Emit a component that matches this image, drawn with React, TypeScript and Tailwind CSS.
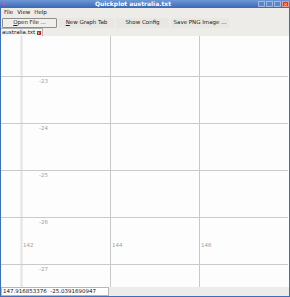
import React from 'react';

const font = { fontFamily: '"DejaVu Sans", "Liberation Sans", sans-serif' };

const hLines = [76, 123, 170, 217, 264];
const vLines = [110, 199];
const yLabels = ['-23', '-24', '-25', '-26', '-27'];

const Plot = () => (
  <svg width="287" height="251" className="block">
    <rect width="287" height="251" fill="#fdfdfd" />
    <line x1="20.5" y1="0" x2="20.5" y2="251" stroke="#e2e2e2" strokeWidth="2" />
    {vLines.map((x) => (
      <line key={x} x1={x - 0.5} y1="0" x2={x - 0.5} y2="251" stroke="#c9c9c9" strokeWidth="1" />
    ))}
    {hLines.map((y, i) => (
      <g key={y}>
        <line x1="0" y1={y - 36 + 0.5} x2="287" y2={y - 36 + 0.5} stroke="#cacaca" strokeWidth="1" />
        <text x="38" y={y - 36 + 7} fontSize="5.5" fill="#a0a0a0" style={font}>
          {yLabels[i]}
        </text>
      </g>
    ))}
    <text x="22" y="211" fontSize="5.5" fill="#a0a0a0" style={font}>142</text>
    <text x="111" y="211" fontSize="5.5" fill="#a0a0a0" style={font}>144</text>
    <text x="200" y="211" fontSize="5.5" fill="#a0a0a0" style={font}>146</text>
  </svg>
);

const ToolButton = ({ children, bordered }: { children: React.ReactNode; bordered?: boolean }) => (
  <div
    className={`h-[10px] flex items-center justify-center text-[5.5px] text-[#222] rounded-[1px] ${
      bordered ? 'border border-[#8e8f8b] bg-[#f0efec]' : 'bg-[#e8e7e2]'
    }`}
  >
    {children}
  </div>
);

export default function App() {
  return (
    <div className="w-[290px] h-[297px] bg-[#3f6fb8] flex flex-col overflow-hidden" style={font}>
      <div className="h-[8px] flex items-center relative bg-gradient-to-b from-[#6e97d6] to-[#3a68b2]">
        <span className="absolute left-[1px] top-[0px] text-[6px] text-[#d24bd9] leading-none">∧</span>
        <div className="flex-1 text-center pr-[24px] text-[6px] font-bold text-white leading-none">Quickplot australia.txt</div>
        <div className="absolute right-[1px] top-[1px] flex gap-[1px]">
          <div className="w-[7px] h-[6px] bg-[#5d86c8] border border-[#9db8e0]" />
          <div className="w-[7px] h-[6px] bg-[#5d86c8] border border-[#9db8e0]" />
          <div className="w-[7px] h-[6px] bg-[#5d86c8] border border-[#9db8e0]" />
          <div className="w-[7px] h-[6px] bg-[#d23a2c] border border-[#e89a90] text-white text-[5px] leading-[4px] text-center">×</div>
        </div>
      </div>
      <div className="mx-[1px] flex-1 flex flex-col bg-[#edece8]">
        <div className="h-[9px] flex items-center gap-[4px] pl-[3px] text-[5.5px] text-[#222]">
          <span>File</span>
          <span>View</span>
          <span>Help</span>
        </div>
        <div className="h-[11px] flex items-center gap-[2px] pl-[1px]">
          <div className="w-[55px]">
            <ToolButton bordered>
              <span><u>O</u>pen File ...</span>
            </ToolButton>
          </div>
          <div className="w-[55px]">
            <ToolButton>
              <span><u>N</u>ew Graph Tab</span>
            </ToolButton>
          </div>
          <div className="w-[53px]">
            <ToolButton>Show Config</ToolButton>
          </div>
          <div className="w-[58px]">
            <ToolButton>Save PNG Image ...</ToolButton>
          </div>
        </div>
        <div className="h-[8px] flex items-end">
          <div className="h-[8px] flex items-center gap-[2px] px-[1px] bg-[#f6f5f2] border-t border-r border-[#b4b3ae] text-[5.5px] text-[#111]">
            <span>australia.txt</span>
            <span className="w-[4px] h-[4px] bg-[#d9a09a] border border-[#b33] text-[4px] leading-[2px] text-center text-[#a00]">×</span>
          </div>
        </div>
        <div className="h-[251px] bg-white">
          <Plot />
        </div>
        <div className="h-[9px] flex items-center">
          <div className="w-[108px] h-[9px] bg-white border border-[#b8b7b2] flex items-center pl-[1px] text-[5.5px] text-[#111] leading-none">
            147.916853376 &nbsp;-25.0391690947
          </div>
          <div className="flex-1" />
        </div>
      </div>
      <div className="h-[1px] bg-[#3f6fb8]" />
    </div>
  );
}
